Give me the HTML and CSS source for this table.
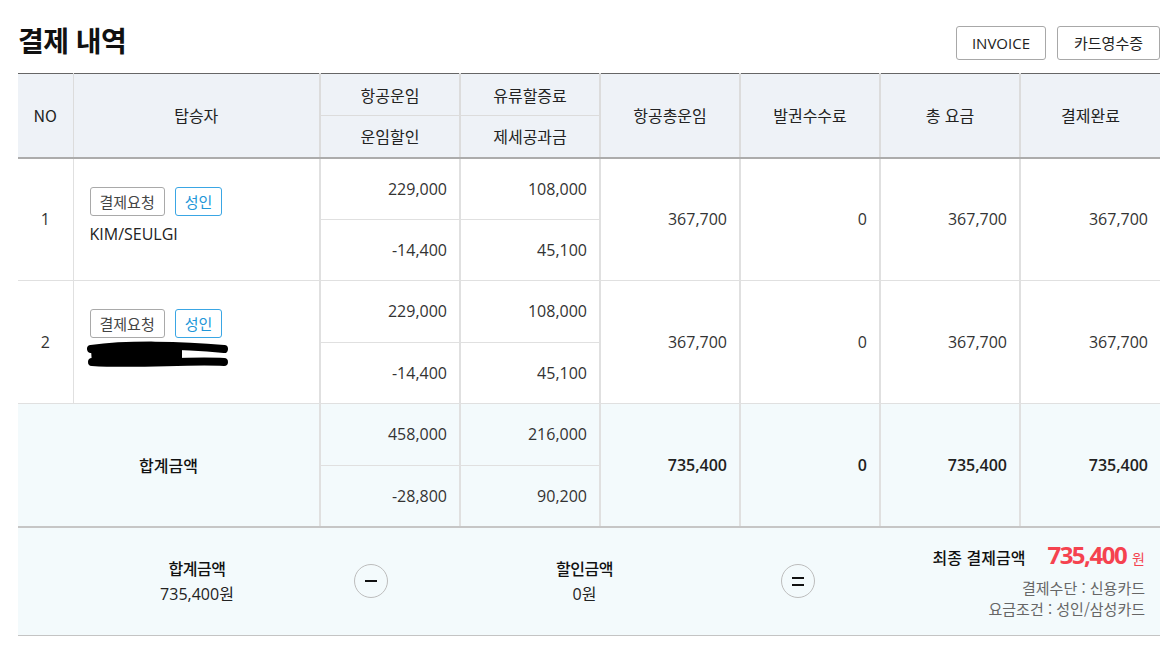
FILE: index.html
```html
<!DOCTYPE html>
<html lang="ko">
<head>
<meta charset="utf-8">
<title>결제 내역</title>
<link rel="stylesheet" href="styles.css">
</head>
<body>
<div class="page">
  <div class="top">
    <h2 class="title">결제 내역</h2>
    <div class="btns">
      <button class="btn">INVOICE</button>
      <button class="btn">카드영수증</button>
    </div>
  </div>

  <table class="pay">
    <colgroup>
      <col class="c-no">
      <col class="c-name">
      <col class="c-num"><col class="c-num"><col class="c-num">
      <col class="c-num"><col class="c-num"><col class="c-num">
    </colgroup>
    <thead>
      <tr>
        <th rowspan="2" class="h-no h-end">NO</th>
        <th rowspan="2" class="h-name h-end">탑승자</th>
        <th class="h-sub">항공운임</th>
        <th class="h-sub">유류할증료</th>
        <th rowspan="2" class="h-end">항공총운임</th>
        <th rowspan="2" class="h-end">발권수수료</th>
        <th rowspan="2" class="h-end">총 요금</th>
        <th rowspan="2" class="h-end">결제완료</th>
      </tr>
      <tr>
        <th class="h-end">운임할인</th>
        <th class="h-end">제세공과금</th>
      </tr>
    </thead>
    <tbody>
      <tr>
        <td rowspan="2" class="no">1</td>
        <td rowspan="2" class="pax">
          <div class="tags"><span class="tag">결제요청</span><span class="tag tag-blue">성인</span></div>
          <div class="pname">KIM/SEULGI</div>
        </td>
        <td class="num">229,000</td>
        <td class="num">108,000</td>
        <td rowspan="2" class="num">367,700</td>
        <td rowspan="2" class="num">0</td>
        <td rowspan="2" class="num">367,700</td>
        <td rowspan="2" class="num">367,700</td>
      </tr>
      <tr>
        <td class="num">-14,400</td>
        <td class="num">45,100</td>
      </tr>
      <tr>
        <td rowspan="2" class="no">2</td>
        <td rowspan="2" class="pax">
          <div class="tags"><span class="tag">결제요청</span><span class="tag tag-blue">성인</span></div>
          <div class="pname redacted">
            <svg class="scribble" width="142" height="28" viewBox="0 0 142 28">
              <path d="M4 9 C 30 4, 60 3, 95 5 L 95 23 C 60 25, 30 26, 5 23 Z" fill="#000"/>
              <path d="M4 8 C 40 3, 95 4, 137 8" stroke="#000" stroke-width="8" fill="none" stroke-linecap="round"/>
              <path d="M5 21 C 50 24, 100 19, 137 21" stroke="#000" stroke-width="8" fill="none" stroke-linecap="round"/>
            </svg>
          </div>
        </td>
        <td class="num">229,000</td>
        <td class="num">108,000</td>
        <td rowspan="2" class="num">367,700</td>
        <td rowspan="2" class="num">0</td>
        <td rowspan="2" class="num">367,700</td>
        <td rowspan="2" class="num">367,700</td>
      </tr>
      <tr>
        <td class="num">-14,400</td>
        <td class="num">45,100</td>
      </tr>
    </tbody>
    <tfoot>
      <tr>
        <td rowspan="2" colspan="2" class="sum-label">합계금액</td>
        <td class="num">458,000</td>
        <td class="num">216,000</td>
        <td rowspan="2" class="num strong">735,400</td>
        <td rowspan="2" class="num strong">0</td>
        <td rowspan="2" class="num strong">735,400</td>
        <td rowspan="2" class="num strong">735,400</td>
      </tr>
      <tr class="last">
        <td class="num">-28,800</td>
        <td class="num">90,200</td>
      </tr>
    </tfoot>
  </table>

  <div class="summary">
    <div class="s-block">
      <div class="s-label">합계금액</div>
      <div class="s-value">735,400원</div>
    </div>
    <div class="op"><span class="bar"></span></div>
    <div class="s-block">
      <div class="s-label">할인금액</div>
      <div class="s-value">0원</div>
    </div>
    <div class="op op-eq"><span class="bar"></span><span class="bar"></span></div>
    <div class="final">
      <div class="final-line">
        <span class="final-label">최종 결제금액</span>
        <span class="final-amt">735,400</span>
        <span class="final-won">원</span>
      </div>
      <div class="detail">결제수단 : 신용카드</div>
      <div class="detail">요금조건 : 성인/삼성카드</div>
    </div>
  </div>
</div>
</body>
</html>
```

FILE: styles.css
```css
* { box-sizing: border-box; }

body {
  margin: 0;
  background: #fff;
  color: #222;
  font-family: "Open Sans", "Noto Sans CJK KR", sans-serif;
}

.page {
  padding: 26px 16px 40px 18px;
}

.top {
  display: flex;
  justify-content: space-between;
  align-items: flex-start;
  height: 47px;
}

.title {
  margin: -3px 0 0 0;
  font-family: "Noto Sans CJK KR", sans-serif;
  font-size: 28px;
  font-weight: 700;
  line-height: 34px;
  letter-spacing: -0.5px;
  color: #111;
}

.btns {
  display: flex;
  gap: 11px;
}

.btn {
  height: 34px;
  padding: 0 15px;
  border: 1px solid #a8a8a8;
  border-radius: 3px;
  background: #fff;
  color: #222;
  font-family: "Open Sans", "Noto Sans CJK KR", sans-serif;
  font-size: 15px;
  line-height: 32px;
}

.btn + .btn {
  padding: 0 16px;
}

/* table */
.pay {
  width: 100%;
  border-collapse: collapse;
  table-layout: fixed;
  border-top: 1px solid #666;
}

.c-no { width: 55px; }
.c-name { width: 247px; }
.c-num { width: 140px; }

.pay th {
  height: 42px;
  padding: 0;
  background: #eef2f7;
  font-family: "Noto Sans CJK KR", sans-serif;
  font-weight: 400;
  font-size: 16px;
  color: #222;
  border-left: 2px solid #dcdcdc;
  border-bottom: 1px solid #dcdcdc;
}

.pay th.h-no { border-left: none; }
.pay th.h-name { border-left: 1px solid #dcdcdc; }
.pay th.h-end { border-bottom: 2px solid #acacac; }

.pay td {
  height: 61.5px;
  padding: 0 12px;
  font-size: 16px;
  color: #333;
  text-align: right;
  border-left: 2px solid #e0e0e0;
  border-bottom: 1px solid #e0e0e0;
}

.pay td.no {
  padding: 0;
  text-align: center;
  border-left: none;
}

.pay td.pax {
  padding: 28px 0 0 16px;
  text-align: left;
  vertical-align: top;
  border-left: 1px solid #e0e0e0;
}

.tags {
  display: flex;
  gap: 10px;
}

.tag {
  display: inline-block;
  height: 29px;
  padding: 0 9px;
  border: 1px solid #a9a9a9;
  border-radius: 3px;
  font-family: "Noto Sans CJK KR", sans-serif;
  font-size: 15px;
  line-height: 27px;
  color: #444;
  background: #fff;
}

.tag-blue {
  border-color: #3aa6e4;
  color: #2196d8;
}

.pname {
  margin-top: 6px;
  height: 24px;
  line-height: 24px;
  font-size: 16px;
  color: #222;
}

.redacted {
  position: relative;
}

.scribble {
  position: absolute;
  left: -3px;
  top: -3px;
}

.pay tfoot td {
  background: #f3fafc;
}

.pay td.sum-label {
  padding: 0;
  text-align: center;
  border-left: none;
  font-family: "Noto Sans CJK KR", sans-serif;
  font-weight: 500;
  color: #111;
}

.pay td.strong {
  font-weight: 600;
  color: #222;
}

.pay tfoot tr.last td,
.pay tfoot td[rowspan] {
  border-bottom: 2px solid #c6c6c6;
}

/* summary */
.summary {
  display: grid;
  grid-template-columns: 314px 34px 393px 34px 1fr;
  align-items: center;
  height: 108px;
  padding: 0 15px 0 22px;
  background: #f3fafc;
  border-bottom: 1px solid #c4c4c4;
}

.s-block {
  text-align: center;
  font-size: 16px;
  line-height: 26px;
  color: #222;
}

.s-label {
  font-family: "Noto Sans CJK KR", sans-serif;
  font-size: 16px;
  font-weight: 500;
  letter-spacing: -0.5px;
  color: #111;
}

.op {
  width: 34px;
  height: 34px;
  border: 1px solid #bdbdbd;
  border-radius: 50%;
  display: flex;
  flex-direction: column;
  align-items: center;
  justify-content: center;
  gap: 5px;
}

.bar {
  display: block;
  width: 12px;
  height: 2px;
  background: #111;
}

.final {
  text-align: right;
  padding-bottom: 6px;
}

.final-line {
  display: flex;
  justify-content: flex-end;
  align-items: baseline;
  height: 30px;
  margin-bottom: 9px;
}

.final-label {
  font-family: "Noto Sans CJK KR", sans-serif;
  font-size: 16px;
  font-weight: 500;
  color: #111;
}

.final-amt {
  margin-left: 22px;
  font-size: 24px;
  font-weight: 700;
  letter-spacing: -1.5px;
  color: #f5424f;
}

.final-won {
  margin-left: 6px;
  font-family: "Noto Sans CJK KR", sans-serif;
  font-size: 14px;
  color: #f5424f;
}

.detail {
  font-family: "Noto Sans CJK KR", sans-serif;
  font-size: 15px;
  line-height: 21px;
  color: #666;
}
```
